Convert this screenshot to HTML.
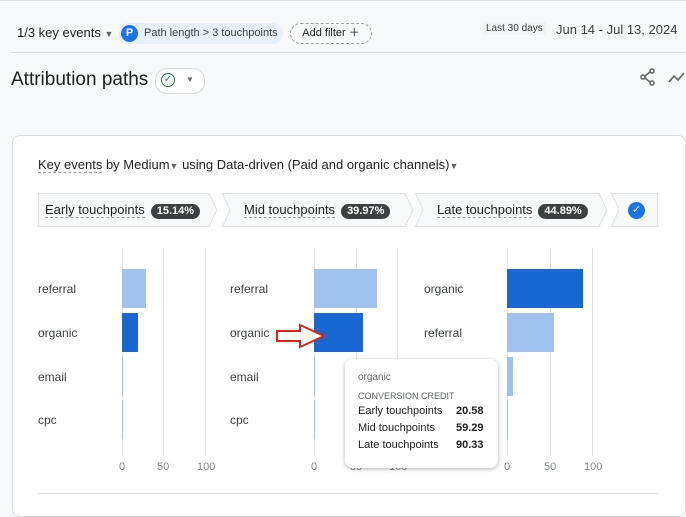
<!DOCTYPE html>
<html><head><style>
body{margin:0;width:686px;height:500px;background:#f8f9fa;font-family:"Liberation Sans",sans-serif;color:#3c4043;position:relative;overflow:hidden}
.a{position:absolute;white-space:nowrap}
.card{position:absolute;left:12px;top:135px;width:672px;height:380px;background:#fff;border:1px solid #dadce0;border-radius:8px}
.grid{position:absolute;width:1px;background:#e0e0e0;top:248px;height:208px}
.bar{position:absolute;height:39px}
.lb{background:#a1c2ef}.db{background:#1967d2}
.lab{position:absolute;font-size:12px;color:#3c4043}
.ax{position:absolute;font-size:11px;color:#80868b;top:461px}
.tab{position:absolute;top:193px;height:34px;font-size:13px;line-height:34px;color:#202124}
.pill{display:inline-block;background:#3c4043;color:#fff;font-size:11px;line-height:15px;padding:0 6px;border-radius:8px;margin-left:6px;font-weight:bold}
.u{border-bottom:1px dashed #9aa0a6}
</style></head><body>
<div class="a" style="left:0;right:0;top:0;height:1px;background:#e0e0e0"></div>
<div class="a" style="left:17px;top:25px;font-size:13px;color:#202124">1/3 key events <span style="font-size:9px;color:#5f6368">▼</span></div>
<div class="a" style="left:119px;top:23px;width:164px;height:21px;border-radius:11px;background:#e8f0fe"></div>
<div class="a" style="left:121px;top:25px;width:17px;height:17px;border-radius:50%;background:#1a73e8;color:#fff;font-size:11px;font-weight:bold;text-align:center;line-height:17px">P</div>
<div class="a" style="left:144px;top:27px;font-size:11px;color:#3c4043">Path length &gt; 3 touchpoints</div>
<div class="a" style="left:290px;top:23px;width:80px;height:19px;border:1px dashed #9aa0a6;border-radius:11px;font-size:11px;line-height:19px;text-align:center;color:#202124">Add filter ＋</div>
<div class="a" style="left:483px;top:22px;background:#f1f3f4;padding:1px 3px;font-size:10px;color:#3c4043">Last 30 days</div>
<div class="a" style="left:556px;top:22px;font-size:13px;color:#3c4043">Jun 14 - Jul 13, 2024</div>
<div class="a" style="left:10px;right:0;top:52px;height:1px;background:#dadce0"></div>
<div class="a" style="left:11px;top:69px;font-size:19px;color:#202124">Attribution paths</div>
<div class="a" style="left:155px;top:68px;width:48px;height:24px;border:1px solid #dadce0;border-radius:12px;background:#fff"></div>
<div class="a" style="left:161px;top:73px;width:12px;height:12px;border:1.5px solid #188038;border-radius:50%;color:#188038;font-size:10px;line-height:12px;text-align:center">✓</div>
<div class="a" style="left:186px;top:75px;font-size:8px;color:#5f6368">▼</div>
<svg class="a" style="left:639px;top:68px" width="18" height="18" viewBox="0 0 18 18"><circle cx="13" cy="3" r="2" fill="none" stroke="#5f6368" stroke-width="1.5"/><circle cx="4" cy="9" r="2" fill="none" stroke="#5f6368" stroke-width="1.5"/><circle cx="13" cy="15" r="2" fill="none" stroke="#5f6368" stroke-width="1.5"/><path d="M6 8L11 4M6 10L11 14" stroke="#5f6368" stroke-width="1.5"/></svg>
<svg class="a" style="left:668px;top:68px" width="18" height="18" viewBox="0 0 18 18"><path d="M1 14L6 8L10 12L16 5" stroke="#5f6368" stroke-width="1.6" fill="none"/></svg>
<div class="card"></div>
<div class="a" style="left:38px;top:157px;font-size:13px;color:#202124"><span class="u">Key events</span> by Medium<span style="font-size:9px;color:#5f6368">▼</span> using Data-driven (Paid and organic channels)<span style="font-size:9px;color:#5f6368">▼</span></div>
<svg class="a" style="left:0;top:0" width="686" height="240">
<g fill="#f8f9fa" stroke="#e0e0e0" stroke-width="1">
<path d="M38.5 193.5H209L217 210L209 226.5H38.5Z"/>
<path d="M222.5 193.5H405L413 210L405 226.5H222.5L230 210Z"/>
<path d="M415.5 193.5H599L607 210L599 226.5H415.5L423 210Z"/>
<path d="M611.5 193.5H657.5V226.5H611.5L619 210Z"/>
</g></svg>
<div class="tab" style="left:45px"><span class="u">Early touchpoints</span><span class="pill">15.14%</span></div>
<div class="tab" style="left:244px"><span class="u">Mid touchpoints</span><span class="pill">39.97%</span></div>
<div class="tab" style="left:437px"><span class="u">Late touchpoints</span><span class="pill">44.89%</span></div>
<div class="a" style="left:628px;top:202px;width:17px;height:17px;border-radius:50%;background:#1a73e8;color:#fff;font-size:11px;line-height:17px;text-align:center">✓</div>

<div class="grid" style="left:122px"></div><div class="grid" style="left:163px"></div><div class="grid" style="left:205px"></div>
<div class="grid" style="left:314px"></div><div class="grid" style="left:356px"></div><div class="grid" style="left:397px"></div>
<div class="grid" style="left:507px"></div><div class="grid" style="left:550px"></div><div class="grid" style="left:592px"></div>

<div class="bar lb" style="left:122px;top:269px;width:24px"></div>
<div class="bar db" style="left:122px;top:313px;width:16px"></div>
<div class="bar lb" style="left:122px;top:357px;width:1px"></div>
<div class="bar lb" style="left:122px;top:400px;width:1px"></div>
<div class="bar lb" style="left:314px;top:269px;width:63px"></div>
<div class="bar db" style="left:314px;top:313px;width:49px"></div>
<div class="bar lb" style="left:314px;top:357px;width:1px"></div>
<div class="bar lb" style="left:314px;top:400px;width:1px"></div>
<div class="bar db" style="left:507px;top:269px;width:76px"></div>
<div class="bar lb" style="left:507px;top:313px;width:47px"></div>
<div class="bar lb" style="left:507px;top:357px;width:6px"></div>
<div class="bar lb" style="left:507px;top:400px;width:1px"></div>

<div class="lab" style="left:38px;top:282px">referral</div><div class="lab" style="left:38px;top:326px">organic</div><div class="lab" style="left:38px;top:370px">email</div><div class="lab" style="left:38px;top:413px">cpc</div>
<div class="lab" style="left:230px;top:282px">referral</div><div class="lab" style="left:230px;top:326px">organic</div><div class="lab" style="left:230px;top:370px">email</div><div class="lab" style="left:230px;top:413px">cpc</div>
<div class="lab" style="left:424px;top:282px">organic</div><div class="lab" style="left:424px;top:326px">referral</div>

<div class="ax" style="left:119px">0</div><div class="ax" style="left:157px">50</div><div class="ax" style="left:197px">100</div>
<div class="ax" style="left:311px">0</div><div class="ax" style="left:350px">50</div><div class="ax" style="left:389px">100</div>
<div class="ax" style="left:504px">0</div><div class="ax" style="left:544px">50</div><div class="ax" style="left:584px">100</div>

<svg class="a" style="left:275px;top:323px" width="52" height="26" viewBox="0 0 52 26"><path d="M2 8H25V2L49 13L25 24V18H2Z" fill="#fff" stroke="#e02020" stroke-width="2"/></svg>

<div class="a" style="left:345px;top:359px;width:153px;height:109px;background:#fff;border-radius:8px;box-shadow:0 1px 4px rgba(0,0,0,.3)">
<div class="a" style="left:13px;top:13px;font-size:10px;color:#5f6368">organic</div>
<div class="a" style="left:13px;top:32px;font-size:9px;color:#5f6368">CONVERSION CREDIT</div>
<div class="a" style="left:13px;top:46px;font-size:11px;color:#202124">Early touchpoints</div><div class="a" style="left:111px;top:46px;font-size:11px;font-weight:bold;color:#202124">20.58</div>
<div class="a" style="left:13px;top:63px;font-size:11px;color:#202124">Mid touchpoints</div><div class="a" style="left:111px;top:63px;font-size:11px;font-weight:bold;color:#202124">59.29</div>
<div class="a" style="left:13px;top:80px;font-size:11px;color:#202124">Late touchpoints</div><div class="a" style="left:111px;top:80px;font-size:11px;font-weight:bold;color:#202124">90.33</div>
</div>
<div class="a" style="left:38px;top:493px;width:620px;height:1px;background:#dadce0"></div>
</body></html>
